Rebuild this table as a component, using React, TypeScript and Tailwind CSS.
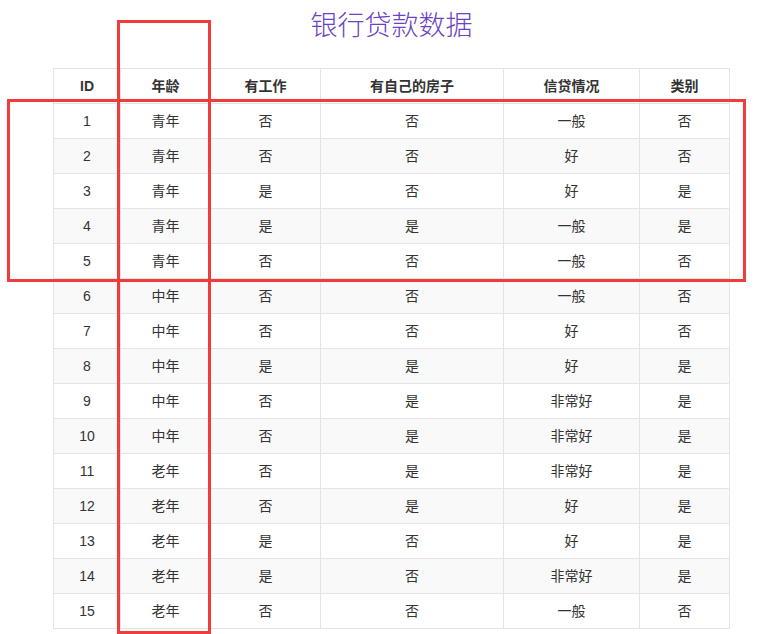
import * as React from 'react';

const headers = ["ID", "年龄", "有工作", "有自己的房子", "信贷情况", "类别"];
const colWidths = ["w-[67px]", "w-[90px]", "w-[110px]", "w-[183px]", "w-[136px]", "w-[90px]"];

const rows: string[][] = [
    ["1", "青年", "否", "否", "一般", "否"],
    ["2", "青年", "否", "否", "好", "否"],
    ["3", "青年", "是", "否", "好", "是"],
    ["4", "青年", "是", "是", "一般", "是"],
    ["5", "青年", "否", "否", "一般", "否"],
    ["6", "中年", "否", "否", "一般", "否"],
    ["7", "中年", "否", "否", "好", "否"],
    ["8", "中年", "是", "是", "好", "是"],
    ["9", "中年", "否", "是", "非常好", "是"],
    ["10", "中年", "否", "是", "非常好", "是"],
    ["11", "老年", "否", "是", "非常好", "是"],
    ["12", "老年", "否", "是", "好", "是"],
    ["13", "老年", "是", "否", "好", "是"],
    ["14", "老年", "是", "否", "非常好", "是"],
    ["15", "老年", "否", "否", "一般", "否"],
];

export default function App() {
    return <div className="relative w-[763px] h-[634px] overflow-hidden bg-white text-[#333] font-['Liberation_Sans','Noto_Sans_CJK_SC',sans-serif]">
        <h1 className="h-[68px] pt-[10px] pl-[20px] text-center text-[27px] leading-[32px] font-light text-[#6b42c4] font-['Liberation_Serif','Noto_Sans_CJK_SC',serif]">银行贷款数据</h1>
        <table className="ml-[53px] border-collapse table-fixed w-[677px] text-[14px]">
            <thead>
                <tr className="h-[35px]">
                    {headers.map((h, i) => <th key={i} className={colWidths[i] + " border border-[#e4e4e4] font-bold text-center align-middle"}>{h}</th>)}
                </tr>
            </thead>
            <tbody>
                {rows.map((r, i) => <tr key={i} className={"h-[35px] " + (i % 2 === 1 ? "bg-[#f9f9f9]" : "bg-white")}>
                    {r.map((c, j) => <td key={j} className="border border-[#e4e4e4] text-center align-middle">{c}</td>)}
                </tr>)}
            </tbody>
        </table>
        {/* red annotation boxes */}
        <div className="absolute left-[117px] top-[20px] w-[94px] h-[614px] border-[3px] border-[#f23b3b]"></div>
        <div className="absolute left-[7px] top-[99px] w-[739px] h-[183px] border-[3px] border-[#f23b3b]"></div>
    </div>;
}
